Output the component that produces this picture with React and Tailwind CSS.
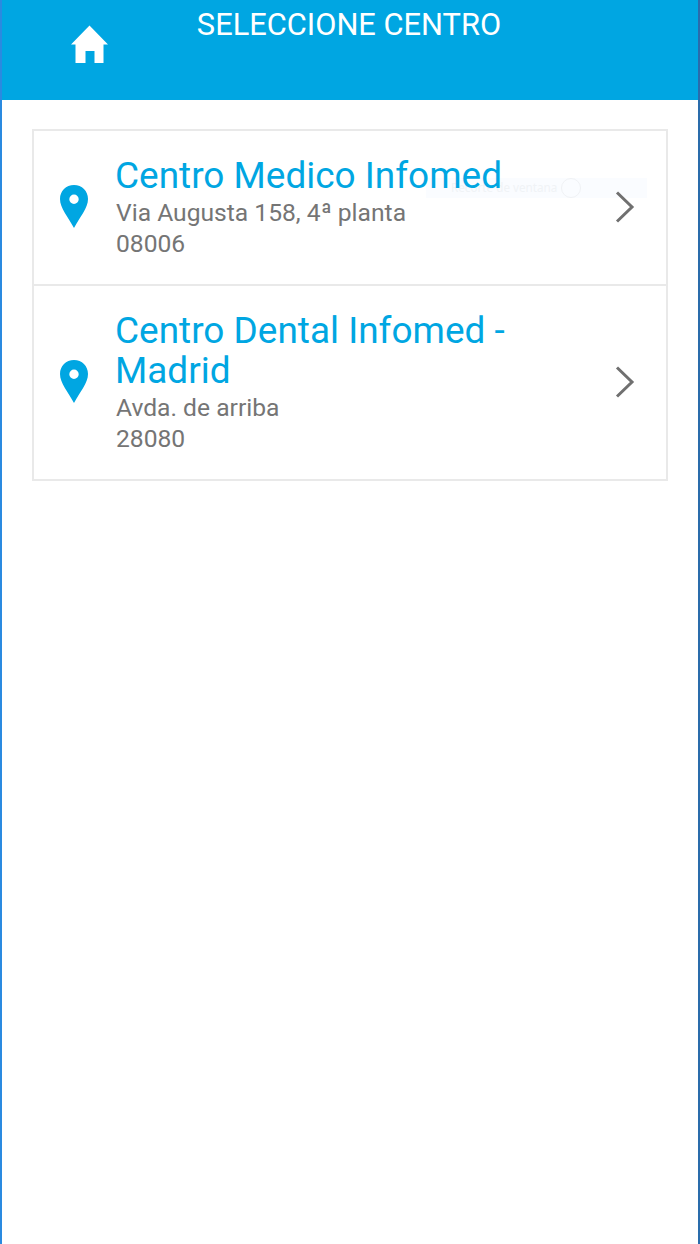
export default function App() {
  const centers = [
    { name: "Centro Medico Infomed", addr: "Via Augusta 158, 4ª planta", zip: "08006" },
    { name: "Centro Dental Infomed - Madrid", addr: "Avda. de arriba", zip: "28080" },
  ];
  return (
    <div className="relative h-[1244px] w-[700px] overflow-hidden border-l-2 border-r-2 border-l-[#2a8ae0] border-r-[#2a6cab] bg-white font-['Roboto',sans-serif]">
      <header className="relative flex h-[100px] justify-center bg-[#00a6e2] pt-[6px] pr-[2px]">
        <svg className="absolute left-[68px] top-[25px]" width="40" height="39" viewBox="0 0 40 39" fill="#fff">
          <path d="M19.5 0.5 L38 19.5 L33.5 19.5 L33.5 38 L24.5 38 L24.5 26 L15.5 26 L15.5 38 L5.5 38 L5.5 19.5 L1 19.5 Z" />
        </svg>
        <h1 className="text-[30.8px] leading-[38px] text-white">SELECCIONE CENTRO</h1>
      </header>
      <div className="relative z-10 mx-[30px] mt-[29px] border-2 border-[#e9e9e9]">
        {centers.map((c, i) => (
          <div key={c.zip} className={`flex items-center pb-[25px] pl-[26px] pr-[31px] pt-[25px] ${i ? "border-t-2 border-[#e9e9e9]" : ""}`}>
            <svg className="mb-[2px] shrink-0" width="28" height="43" viewBox="0 0 28 43" fill="#00a6e2">
              <path fillRule="evenodd" d="M14 0 C6 0 0 6 0 14 C0 23 8 32 14 43 C20 32 28 23 28 14 C28 6 22 0 14 0 Z M14 9.5 A4.7 4.7 0 1 1 14 18.9 A4.7 4.7 0 1 1 14 9.5 Z" />
            </svg>
            <div className="ml-[28px] min-w-0 flex-1">
              <div className="-ml-[1px] w-[420px] text-[36.96px] leading-[40px] text-[#00a6e2]">{c.name}</div>
              <div className="mt-[1px] text-[24.64px] leading-[31px] text-[#757575]">{c.addr}</div>
              <div className="text-[24.64px] leading-[31px] text-[#757575]">{c.zip}</div>
            </div>
            <svg className="mb-[1px] shrink-0" width="20" height="32" viewBox="0 0 20 32" fill="none" stroke="#707070" strokeWidth="3">
              <path d="M2 1.5 L17 16 L2 30.5" />
            </svg>
          </div>
        ))}
      </div>
      <div className="absolute left-[424px] top-[178px] z-0 flex h-[20px] w-[221px] items-center bg-[#fafcff] pl-[25px] text-[11.7px] text-[#f0f3f6]">
        <span className="font-['Noto_Sans',sans-serif]">Recorte de ventana</span>
        <span className="ml-[4px] h-[20px] w-[20px] rounded-full border border-[#f0f2f5]" />
      </div>
    </div>
  );
}
